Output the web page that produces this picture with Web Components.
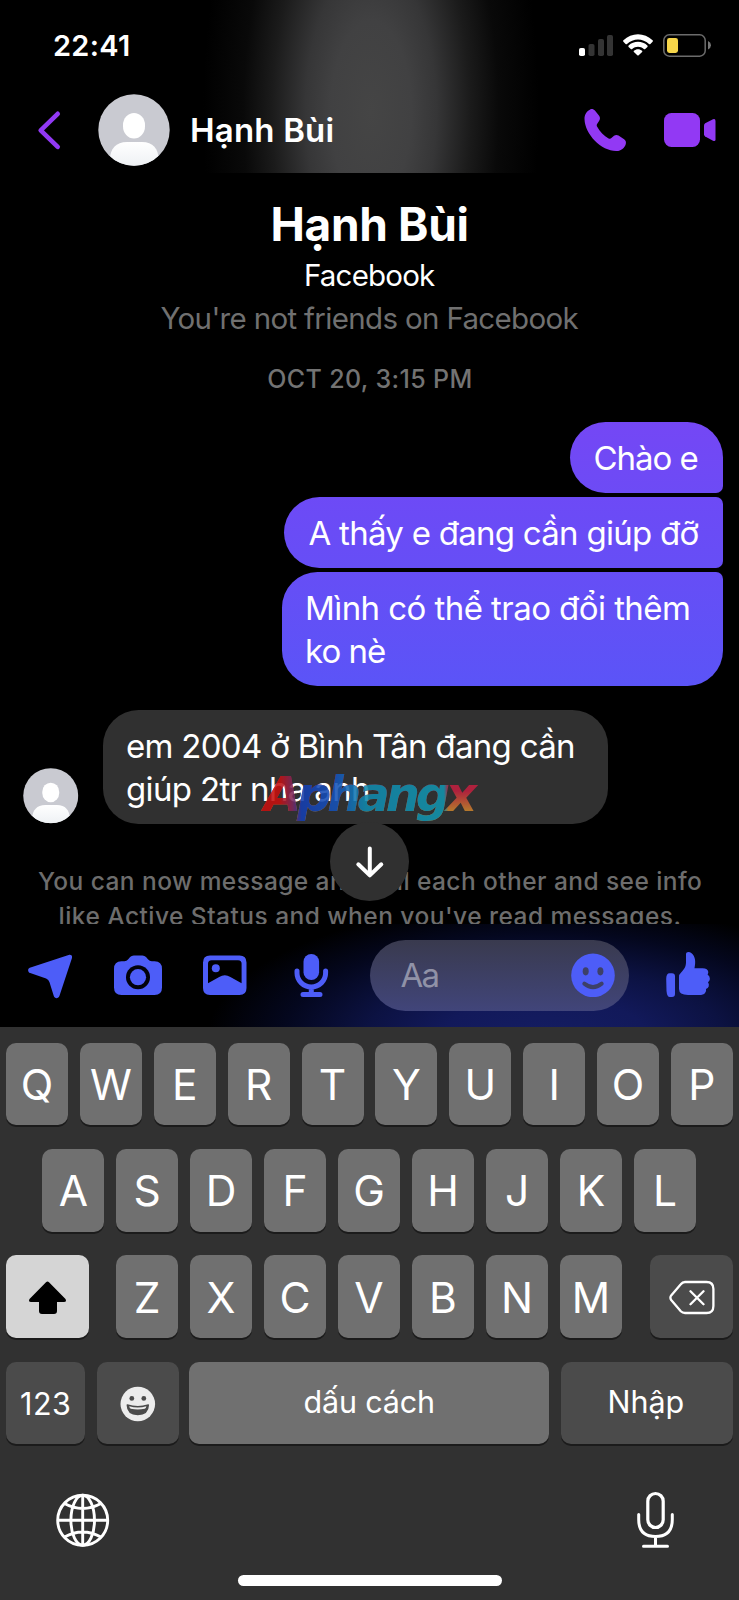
<!DOCTYPE html>
<html lang="vi">
<head>
<meta charset="utf-8">
<title>Hạnh Bùi</title>
<style>
html,body{margin:0;padding:0;background:#000}
body{width:739px;height:1600px;overflow:hidden;font-family:Inter,"Noto Sans",sans-serif;color:#fff}
</style>
</head>
<body>
<chat-app></chat-app>
<script>
const define = (name, html, after) => {
  const tpl = document.createElement('template');
  tpl.innerHTML = html;
  customElements.define(name, class extends HTMLElement {
    connectedCallback() {
      if (this.shadowRoot) return;
      this.attachShadow({mode: 'open'}).append(tpl.content.cloneNode(true));
      if (after) after(this, this.shadowRoot);
    }
  });
};

/* A single line of text whose ink spans exactly w pixels. */
const ctx = document.createElement('canvas').getContext('2d');
define('fit-text', `<style>:host{display:block;white-space:pre}span{display:inline-block}</style><span><slot></slot></span>`, (el, root) => {
  const text = el.textContent, w = +el.getAttribute('w'), cs = getComputedStyle(el), span = root.querySelector('span');
  ctx.font = `${cs.fontStyle} ${cs.fontWeight} ${cs.fontSize} ${cs.fontFamily}`;
  const m = ctx.measureText(text);
  const ink = m.actualBoundingBoxLeft + m.actualBoundingBoxRight;
  span.style.letterSpacing = (text.length > 1 ? (w - ink) / (text.length - 1) : 0) + 'px';
  span.style.marginLeft = m.actualBoundingBoxLeft + 'px';
  el.style.width = w + 'px';
});

/* Each icon: [x, y, width, height] of its view box, then its drawing. */
const icons = {
  signal: [[579,34,34,23], `<rect x="579" y="48" width="6" height="8" rx="1.8" fill="#fff"/><g fill="#343434"><rect x="588.5" y="44" width="6" height="12" rx="1.8"/><rect x="598" y="39" width="6" height="17" rx="1.8"/><rect x="607" y="35" width="6" height="21" rx="1.8"/></g>`],
  wifi: [[623,34,30,23], `<g fill="#fff"><path d="M623.4 40.3C631.5 32.1 644.5 32.1 652.6 40.3Q653.2 41 652.6 41.7L650.4 44Q649.7 44.6 649 44C642.6 38 633.4 38 627 44Q626.3 44.6 625.6 44L623.4 41.7Q622.8 41 623.4 40.3Z"/><path d="M628.6 45.5C633.7 40.6 642.3 40.6 647.4 45.5Q648 46.2 647.4 46.9L645.2 49Q644.5 49.6 643.8 49C640.5 46.1 635.5 46.1 632.2 49Q631.5 49.6 630.8 49L628.6 46.9Q628 46.2 628.6 45.5Z"/><path d="M633.9 50.7C636.2 48.6 639.8 48.6 642.1 50.7Q642.7 51.4 642.1 52.1L638.7 55.3Q638 55.9 637.3 55.3L633.9 52.1Q633.3 51.4 633.9 50.7Z"/></g>`],
  battery: [[663,34,48,23], `<rect x="663.8" y="34.8" width="41.4" height="21.4" rx="5.5" fill="none" stroke="#6c6c6c" stroke-width="1.5"/><rect x="667" y="38" width="11" height="15" rx="2.4" fill="#f7d64a"/><path d="M708 41Q711 42.5 711 45.2T708 49.5Z" fill="#777"/>`],
  back: [[36,108,26,42], `<path d="M57.7 112.8L40.7 129.3L57.7 145.8" fill="none" stroke="#9239f4" stroke-width="4.6" stroke-linecap="round" stroke-linejoin="round"/>`],
  phone: [[584,108,43,44], `<path d="M584.5 119C584.4 114.8 586.8 110.8 590.2 109.4C592 108.7 593.7 109.3 595.1 110.8L599.1 115.7C600.3 117.2 600.2 119 599.2 120.7L597.1 123.9C596.5 124.9 596.7 125.8 597.2 126.8C599.7 131.7 604.1 136 608.6 138.4C609.6 138.9 610.6 138.9 611.4 138.1L614 135.8C615.3 134.7 617.1 134.6 618.5 135.5L624.1 139.2C625.7 140.3 626.3 142 625.8 143.9C624.7 148 621 150.8 616.7 151C601.7 151.4 584.9 134.5 584.5 119Z" fill="#9239f4"/>`],
  video: [[664,112,52,36], `<g fill="#9239f4"><rect x="664" y="113" width="36" height="34" rx="7.5"/><path d="M704 125.6Q704 124.1 705.2 123.3L713 119.3Q715.5 118.4 715.5 121V139.4Q715.5 141.8 713 140.8L705.2 136.4Q704 135.6 704 134.2Z"/></g>`],
  avatar: [[0,0,72,72], `<defs><clipPath id="c"><circle cx="36" cy="36" r="35.7"/></clipPath><linearGradient id="g" x2="0" y2="1"><stop stop-color="#fff"/><stop offset="1" stop-color="#eef1f4"/></linearGradient></defs><g clip-path="url(#c)"><path fill="#c9cad1" d="M0 0H72V72H0z"/><rect x="25" y="19" width="22" height="25.5" rx="11" ry="12" fill="#fff"/><path d="M12 65C12 55 18 48 29 48H44C55 48 60.5 55 60.5 65V72H12Z" fill="url(#g)"/></g>`],
  down: [[350,840,40,42], `<path d="M369.8 847.5V874M358.3 863.3L369.8 874.4L381.3 863.3" fill="none" stroke="#fff" stroke-width="4" stroke-linecap="round" stroke-linejoin="round"/>`],
  send: [[27,952,45,48], `<path d="M28.8 968.7L67.6 955.9C70.1 955.2 71.6 956.6 70.9 959.2L58.4 997C57.4 999.8 53.8 999.9 52.8 997.1L48.5 983.2Q47.7 980.5 45.1 979.4L29.2 974.1C26.6 973 26.4 969.7 28.8 968.7Z" fill="#4d5df8"/>`],
  camera: [[114,953,48,44], `<path fill="#4d5df8" d="M121.5 961.3H124.4Q126.7 961.3 128 959.6L130.1 957.1Q131.5 955.5 133.8 955.5H142.4Q144.6 955.5 146 957.1L148.2 959.6Q149.5 961.3 151.8 961.3H154.5Q162 961.3 162 969V987.5Q162 995 154.5 995H121.5Q114 995 114 987.5V969Q114 961.3 121.5 961.3Z"/><circle cx="138" cy="977.2" r="12" fill="#02020a"/><circle cx="138" cy="977.2" r="8.1" fill="#4d5df8"/>`],
  image: [[203,953,44,44], `<path fill="#4d5df8" fill-rule="evenodd" d="M210 955.5H239.5Q246.5 955.5 246.5 962.5V988Q246.5 995 239.5 995H210Q203 995 203 988V962.5Q203 955.5 210 955.5ZM211.5 960.3Q208 960.3 208 963.8V983.3L219.2 977Q224.8 973.7 230.4 977L241.6 983.3V963.8Q241.6 960.3 238.1 960.3Z"/><circle cx="215.8" cy="968.3" r="4" fill="#4d5df8"/>`],
  mic: [[294,951,35,48], `<rect x="303.5" y="954" width="15.6" height="26" rx="7.8" fill="#4d5df8"/><path d="M297 971V973A14.3 14 0 0 0 325.6 973V971M311.3 988V994M303 994.5H320" fill="none" stroke="#4d5df8" stroke-width="5" stroke-linecap="round"/>`],
  smile: [[571,953,44,44], `<circle cx="593" cy="975.4" r="21.8" fill="#4d5df8"/><g fill="#3d4068"><ellipse cx="585.7" cy="971.3" rx="3" ry="4.1"/><ellipse cx="600.4" cy="971.3" rx="3" ry="4.1"/></g><path d="M584.3 983.7Q593 990.5 601.7 983.7" stroke="#3d4068" stroke-width="4" stroke-linecap="round" fill="none"/>`],
  like: [[666,951,44,48], `<path fill="#4d5df8" d="M666.2 979Q666.2 973.3 669.6 973.3H672Q675 973.3 675 976.3V994Q675 997 672 997H669.8Q667 997 666.5 991ZM679 977Q679 974.4 681.1 972.6C685.2 968 686.2 966.2 686 960V954.3C686 951.5 689.3 951.3 691.6 953.2C695.4 956.6 695.9 961.5 694.5 968.2H702.5Q708 968.2 708.3 972Q708.3 973.3 707.6 974.5Q710 976.2 709.9 979Q709.7 981 708 982.2Q709.4 984 708.7 986.4Q708 988.3 706 989Q706.6 991 705 993Q703.5 995 699 995H688Q679 994.8 679 989Z"/>`],
  shift: [[28,1279,39,36], `<path d="M46 1281.2Q47.5 1280 49 1281.2L65.5 1298Q67 1301 64 1301H57V1310Q57 1313 54 1313H42Q39 1313 39 1310V1301H31Q28 1301 29.5 1298Z" fill="#000"/>`],
  erase: [[668,1278,46,37], `<g fill="none" stroke="#fff" stroke-width="2.3" stroke-linecap="round" stroke-linejoin="round"><path d="M684 1281H705.5Q712.4 1281 712.4 1288V1305Q712.4 1312 705.5 1312H684Q681.5 1312 679.8 1310.3L670.2 1299Q668.6 1296.7 670.2 1294.4L679.8 1283.2Q681.5 1281 684 1281ZM689.5 1290.2L702.5 1303.2M702.5 1290.2L689.5 1303.2"/></g>`],
  emoji: [[120,1385,36,36], `<circle cx="137.8" cy="1403" r="17.3" fill="#ececec"/><g fill="#4b4b4b"><circle cx="131.8" cy="1397.4" r="2.4"/><circle cx="143.8" cy="1397.4" r="2.4"/></g><path d="M127.3 1404Q137.8 1407.3 148.3 1404Q148 1413.5 137.8 1413.5T127.3 1404Z" fill="#4b4b4b" stroke="#4b4b4b" stroke-width="1.5" stroke-linejoin="round"/><path d="M129.2 1405.2Q137.8 1407.6 146.4 1405.2Q146 1407.3 144.7 1407.8Q137.8 1409.3 130.9 1407.8Q129.6 1407.3 129.2 1405.2Z" fill="#ececec"/>`],
  globe: [[56,1494,54,54], `<g fill="none" stroke="#fff" stroke-width="2.9"><circle cx="82.7" cy="1521.3" r="25"/><ellipse cx="82.7" cy="1521.3" rx="11.8" ry="25"/><path d="M82.7 1496V1547M57.5 1521.3H108M64.5 1504.5Q82.7 1514.5 100.9 1504.5M64.5 1538Q82.7 1528 100.9 1538"/></g>`],
  dictate: [[636,1490,39,58], `<g fill="none" stroke="#fff" stroke-width="3" stroke-linecap="round"><rect x="647.8" y="1492.5" width="15.4" height="34" rx="7.7" stroke-width="3.2"/><path d="M638.7 1513.5V1518.5Q638.7 1535.5 655.5 1535.5T672.3 1518.5V1513.5M655.5 1535.5V1545M643.5 1545.2H667.5"/></g>`]
};
define('ui-icon', `<style>:host{display:block;flex:none}svg{display:block;width:100%;height:100%}</style><svg></svg>`, (el, root) => {
  const [box, art] = icons[el.getAttribute('name')], svg = root.querySelector('svg'), s = el.getAttribute('size');
  svg.setAttribute('viewBox', box.join(' '));
  svg.innerHTML = art;
  el.style.width = (s || box[2]) + 'px';
  el.style.height = (s || box[3]) + 'px';
});

define('status-bar', `<style>
:host{display:flex;height:90px;padding:0 28px 0 54px;align-items:center;justify-content:space-between;box-sizing:border-box}
.t{font-size:29px;font-weight:600}.r{display:flex;gap:10px}</style>
<fit-text class="t" w="75">22:41</fit-text><div class="r"><ui-icon name="signal"></ui-icon><ui-icon name="wifi"></ui-icon><ui-icon name="battery"></ui-icon></div>`);

define('chat-header', `<style>
:host{display:block;height:173px;background:radial-gradient(ellipse 168px 380px at 371px 112px,#454545 0,#414142 24%,#363637 39%,#1b1b1b 59%,#090909 76%,#000 100%)}
.nav{display:flex;align-items:center;height:80px;padding:0 23px 0 36px}
.a{margin-left:36px}.n{margin-left:22px;font-size:33px;font-weight:600;flex:none}.p{margin-left:auto;margin-right:37px}</style>
<status-bar></status-bar>
<div class="nav"><ui-icon name="back"></ui-icon><ui-icon class="a" name="avatar" size="72"></ui-icon><fit-text class="n" w="140.5">Hạnh Bùi</fit-text><ui-icon class="p" name="phone"></ui-icon><ui-icon name="video"></ui-icon></div>`);

define('chat-intro', `<style>
:host{display:flex;flex-direction:column;align-items:center;padding-top:23px}
.h{font-size:46px;line-height:56px;font-weight:700;padding-left:1px}.f{font-size:29.5px;line-height:40px;margin-top:3px;padding-left:2px}
.y{font-size:29.5px;line-height:40px;margin-top:3px;color:#707070}.d{font-size:25px;line-height:30px;margin-top:26px;font-weight:450;color:#737373}</style>
<fit-text class="h" w="193">Hạnh Bùi</fit-text><fit-text class="f" w="129">Facebook</fit-text><fit-text class="y" w="418">You're not friends on Facebook</fit-text><fit-text class="d" w="202.5">OCT 20, 3:15 PM</fit-text>`);

define('chat-bubble', `<style>
:host{display:block;box-sizing:border-box;padding:15px 24.5px 13px;font-size:33px;line-height:43px;border-radius:35.5px}
:host([pos=first]){width:153px;border-bottom-right-radius:7px;background:linear-gradient(#7447f5,#6d4bf5)}
:host([pos=mid]){width:439px;border-top-right-radius:7px;border-bottom-right-radius:7px;background:linear-gradient(#6d4af6,#664ef6)}
:host([pos=last]){width:441px;border-top-right-radius:7px;background:linear-gradient(#664ef6,#5b54f7);padding-left:25px}
:host([pos=in]){width:505px;background:#303030}
</style><slot></slot>`);

define('brand-mark', `<style>
:host{display:block;position:absolute;left:260px;top:765px;width:222px;font:italic bold 48px/58px "DejaVu Sans",sans-serif;opacity:.88}
fit-text{color:transparent;background:linear-gradient(90deg,#c6100f 0 9%,#7b285d 15%,#153eb1 19%,#1553b9 35%,#1189ae 48%,#1294ae 84%,transparent 86%),linear-gradient(#c0203f 45%,#c8862c 80%);-webkit-background-clip:text;background-clip:text}
</style><fit-text w="219">Aphangx</fit-text>`);

define('chat-thread', `<style>
:host{display:block;height:751px;overflow:hidden}
.out{display:flex;flex-direction:column;align-items:flex-end;gap:4px;margin:27.5px 16px 0 0}
.in{display:flex;align-items:flex-end;gap:24px;margin:24px 0 0 23px}
.note{display:flex;flex-direction:column;align-items:center;font-size:24.5px;line-height:35px;font-weight:450;color:#6d6d6d;margin-top:40px}
.down{position:absolute;left:330px;top:822px;width:79px;height:79px;border-radius:50%;background:#303030;display:grid;place-items:center}
</style>
<chat-intro></chat-intro>
<div class="out">
<chat-bubble pos="first"><fit-text w="103">Chào e</fit-text></chat-bubble>
<chat-bubble pos="mid"><fit-text w="390">A thấy e đang cần giúp đỡ</fit-text></chat-bubble>
<chat-bubble pos="last"><fit-text w="382">Mình có thể trao đổi thêm</fit-text><fit-text w="78">ko nè</fit-text></chat-bubble>
</div>
<div class="in"><ui-icon name="avatar" size="55.5"></ui-icon><chat-bubble pos="in"><fit-text w="446">em 2004 ở Bình Tân đang cần</fit-text><fit-text w="241">giúp 2tr nha anh</fit-text></chat-bubble></div>
<div class="note"><fit-text w="663">You can now message and call each other and see info</fit-text><fit-text w="620">like Active Status and when you've read messages.</fit-text></div>
<brand-mark></brand-mark>
<div class="down"><ui-icon name="down"></ui-icon></div>`);

define('chat-composer', `<style>
:host{display:flex;align-items:center;height:102.5px;padding:0 29px 0 27.5px;box-sizing:border-box;background:radial-gradient(ellipse 345px 140px at 545px 115px,#141d62 0,#12195a 30%,#0c1242 52%,#04071e 76%,#000 98%)}
.c{margin-left:41.5px}.i{margin-left:41px}.m{margin-left:47px}.k{margin-left:auto}
.pill{display:flex;align-items:center;justify-content:space-between;width:258.5px;height:71px;box-sizing:border-box;margin-left:41px;padding:0 13.5px 0 30.5px;border-radius:36px;background:linear-gradient(#393a4e,#41457a);color:#9092a7;font-size:33px}
</style>
<ui-icon name="send"></ui-icon><ui-icon class="c" name="camera"></ui-icon><ui-icon class="i" name="image"></ui-icon><ui-icon class="m" name="mic"></ui-icon>
<div class="pill"><fit-text w="37">Aa</fit-text><ui-icon name="smile"></ui-icon></div><ui-icon class="k" name="like"></ui-icon>`);

define('key-cap', `<style>
:host{display:flex;align-items:center;justify-content:center;box-sizing:border-box;width:62px;height:82.7px;border-radius:10px;background:#707070;box-shadow:0 2px 0 #1b1b1b;font-size:42.5px;line-height:50px;font-weight:400;padding-top:2px}
:host([dark]){background:#4b4b4b}:host([lit]){background:#d5d5d5}:host([label]){font-size:30.5px}
</style><slot></slot>`);

const letterRow = s => s.split('').map(c => `<key-cap>${c}</key-cap>`).join('');
define('key-board', `<style>
:host{display:block;height:573.5px;box-sizing:border-box;background:#313131;padding:16px 6px 0}
.row{display:flex;justify-content:space-between;margin-bottom:23.7px}
.two{padding:0 37px 0 36.3px}.mid{display:flex;gap:12px;margin-right:1px}
.w{width:83px}.n{width:79px}.e{width:82px}.s{width:359.5px}.r{width:172px}
.n{padding-top:3px}.s,.r{padding:0 0 2px}.four{justify-content:flex-start}.e{margin-left:12px}.s{margin-left:10px}.r{margin-left:12px}
.foot{display:flex;justify-content:space-between;padding:0 58px 0 50px;margin-top:47px;align-items:center}
.home{width:264px;height:11px;border-radius:6px;background:#fff;margin:25.5px auto 0}
</style>
<div class="row">${letterRow('QWERTYUIOP')}</div>
<div class="row two">${letterRow('ASDFGHJKL')}</div>
<div class="row"><key-cap class="w" lit><ui-icon name="shift"></ui-icon></key-cap><div class="mid">${letterRow('ZXCVBNM')}</div><key-cap class="w" dark><ui-icon name="erase"></ui-icon></key-cap></div>
<div class="row four"><key-cap class="n" dark label><fit-text w="49">123</fit-text></key-cap><key-cap class="e" dark><ui-icon name="emoji"></ui-icon></key-cap><key-cap class="s" label><fit-text w="128.5">dấu cách</fit-text></key-cap><key-cap class="r" dark label><fit-text w="74">Nhập</fit-text></key-cap></div>
<div class="foot"><ui-icon name="globe"></ui-icon><ui-icon name="dictate"></ui-icon></div>
<div class="home"></div>`);

define('chat-app', `<style>:host{display:block;position:relative;width:739px;height:1600px;overflow:hidden;background:#000}</style>
<chat-header></chat-header><chat-thread></chat-thread><chat-composer></chat-composer><key-board></key-board>`);
</script>
</body>
</html>
